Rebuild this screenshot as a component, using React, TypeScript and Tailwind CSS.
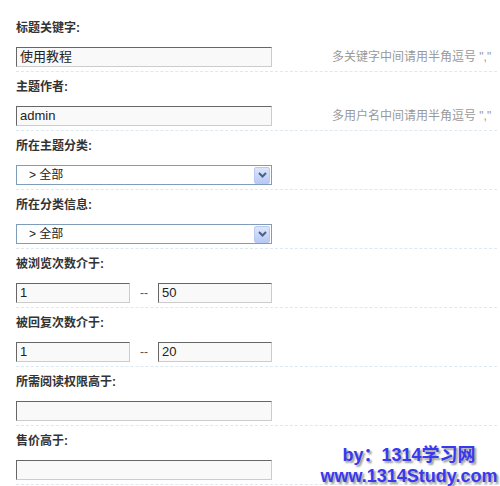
const font = { fontFamily: '"Liberation Sans", "Noto Sans CJK SC", sans-serif' };

function TextBox({ value = "", width = "w-[256px]" }: { value?: string; width?: string }) {
  return (
    <div
      className={`${width} h-[20px] shrink-0 border border-t-[#666] border-l-[#666] border-r-[#ccc] border-b-[#ccc] bg-[#f9f9f9] pl-[3px] text-[13px] leading-[18px] text-[#222]`}
    >
      {value}
    </div>
  );
}

function SelectBox({ value }: { value: string }) {
  return (
    <div className="flex h-[20px] w-[256px] shrink-0 items-center border border-[#7f9db9] bg-white text-[12px] text-[#222]">
      <span className="flex-1 pl-[12px]">&gt; {value}</span>
      <span className="mr-[1px] flex h-[17px] w-[16px] items-center justify-center rounded-[2px] border border-[#b9c9ef] bg-gradient-to-b from-[#dde6fd] to-[#b7c9f5]">
        <svg width="9" height="6" viewBox="0 0 9 6">
          <path d="M1 1 L4.5 4.5 L8 1" fill="none" stroke="#4d6185" strokeWidth="2" />
        </svg>
      </span>
    </div>
  );
}

function Row({ label, children }: { label: string; children: React.ReactNode }) {
  return (
    <div className="border-b border-dashed border-[#dce8f2] pt-[7px] pb-[4px]">
      <div className="h-[16px] text-[12px] leading-[16px] font-bold text-[#333]">{label}</div>
      <div className="mt-[11px] flex items-center">{children}</div>
    </div>
  );
}

export default function App() {
  return (
    <div className="relative h-[486px] w-[500px] overflow-hidden bg-white" style={font}>
      <div className="ml-[16px] w-[481px] pt-[13px]">
        <Row label="标题关键字:">
          <TextBox value="使用教程" />
          <span className="ml-[60px] whitespace-nowrap text-[12px] text-[#999]">多关键字中间请用半角逗号 ","</span>
        </Row>
        <Row label="主题作者:">
          <TextBox value="admin" />
          <span className="ml-[60px] whitespace-nowrap text-[12px] text-[#999]">多用户名中间请用半角逗号 ","</span>
        </Row>
        <Row label="所在主题分类:">
          <SelectBox value="全部" />
        </Row>
        <Row label="所在分类信息:">
          <SelectBox value="全部" />
        </Row>
        <Row label="被浏览次数介于:">
          <TextBox value="1" width="w-[114px]" />
          <span className="w-[28px] text-center text-[12px] text-[#555]">--</span>
          <TextBox value="50" width="w-[114px]" />
        </Row>
        <Row label="被回复次数介于:">
          <TextBox value="1" width="w-[114px]" />
          <span className="w-[28px] text-center text-[12px] text-[#555]">--</span>
          <TextBox value="20" width="w-[114px]" />
        </Row>
        <Row label="所需阅读权限高于:">
          <TextBox />
        </Row>
        <Row label="售价高于:">
          <TextBox />
        </Row>
      </div>
      <div className="absolute left-[318px] top-[445px] w-[182px] text-center text-[18px] font-bold leading-[21px] text-[#3838f0] [text-shadow:2px_2px_2px_#9a9a9a]">
        <div>by：1314学习网</div>
        <div>www.1314Study.com</div>
      </div>
    </div>
  );
}
